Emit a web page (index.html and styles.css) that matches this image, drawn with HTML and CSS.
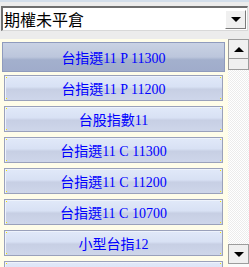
FILE: index.html
```html
<!DOCTYPE html>
<html lang="zh-Hant">
<head>
    <meta charset="UTF-8">
    <meta name="viewport" content="width=device-width, initial-scale=1.0">
    <title>期權未平倉</title>
    <link rel="stylesheet" href="styles.css">
</head>
<body>
    <div class="header">
        <div class="combo">
            <span class="combo-text">期權未平倉</span>
            <span class="combo-button"><span class="arrow-down"></span></span>
        </div>
    </div>

    <div class="panel">
        <div class="list">
            <div class="item selected">台指選11 P 11300</div>
            <div class="item">台指選11 P 11200</div>
            <div class="item">台股指數11</div>
            <div class="item">台指選11 C 11300</div>
            <div class="item">台指選11 C 11200</div>
            <div class="item">台指選11 C 10700</div>
            <div class="item">小型台指12</div>
            <div class="item">小型台指11</div>
        </div>
        <div class="scrollbar">
            <div class="scroll-button"><span class="arrow-up"></span></div>
            <div class="scroll-thumb"></div>
            <div class="scroll-track"></div>
            <div class="scroll-button"><span class="arrow-down"></span></div>
        </div>
    </div>
</body>
</html>
```

FILE: styles.css
```css
html, body {
    margin: 0;
    padding: 0;
    height: 100%;
    overflow: hidden;
}
body {
    background-color: #ececec;
    border-top: 2px solid #d3deea; /* thin blue strip at the top */
    box-sizing: border-box;
    display: flex;
    flex-direction: column;
}
.header {
    padding: 4px 1px 8px 1px;
}
.combo {
    height: 22px;
    background-color: #ffffff;
    border-top: 2px solid #6e6e6e;
    border-left: 2px solid #6e6e6e;
    border-right: 1px solid #d8d8d8;
    border-bottom: 1px solid #d8d8d8;
    display: flex;
    align-items: center;
    justify-content: space-between;
}
.combo-text {
    font-family: "Noto Sans CJK TC", sans-serif;
    font-size: 16px;
    color: #000000;
    padding-left: 1px;
    line-height: 18px;
}
.combo-button {
    width: 19px;
    height: 17px;
    margin-right: 1px;
    background-color: #f0f0f0;
    border-top: 1px solid #ffffff;
    border-left: 1px solid #ffffff;
    border-right: 1px solid #7a7a7a;
    border-bottom: 1px solid #7a7a7a;
    display: flex;
    align-items: center;
    justify-content: center;
}
.arrow-down {
    width: 0;
    height: 0;
    border-left: 5px solid transparent;
    border-right: 5px solid transparent;
    border-top: 5px solid #000000;
}
.arrow-up {
    width: 0;
    height: 0;
    border-left: 5px solid transparent;
    border-right: 5px solid transparent;
    border-bottom: 5px solid #000000;
}
.panel {
    flex: 1;
    display: flex;
    min-height: 0;
}
.list {
    width: 228px;
    background-color: #fffde9; /* pale yellow list background */
    padding: 5px 5px 0 4px;
    box-sizing: border-box;
    display: flex;
    flex-direction: column;
    gap: 5px;
    overflow: hidden;
}
.item {
    flex-shrink: 0;
    height: 26px;
    box-sizing: border-box;
    border: 1px solid #9aa1bb;
    box-shadow: inset 1px 1px 0 #eef3fc;
    /* tiny yellow pixels in the corners, then the glossy fill */
    background:
        linear-gradient(#f2e400, #f2e400) 1px 1px / 1px 1px no-repeat,
        linear-gradient(#f2e400, #f2e400) 1px calc(100% - 1px) / 1px 1px no-repeat,
        linear-gradient(#f2e400, #f2e400) calc(100% - 1px) 1px / 1px 1px no-repeat,
        linear-gradient(#f2e400, #f2e400) calc(100% - 1px) calc(100% - 1px) / 1px 1px no-repeat,
        linear-gradient(to bottom, #e1e9f9 0%, #d8e1f4 45%, #c7cfe4 55%, #ced6ea 100%);
    font-family: "Liberation Serif", "Noto Sans CJK TC", serif;
    font-size: 14px;
    color: #0000ff;
    display: flex;
    align-items: center;
    justify-content: center;
}
.item.selected {
    height: 30px;
    margin: -2px -2px;
    border-color: #8f9bbd;
    box-shadow: none;
    background: linear-gradient(to bottom, #c9d2e4 0%, #bcc6dc 50%, #a3b0cd 60%, #a0accb 100%);
}
.scrollbar {
    width: 21px;
    display: flex;
    flex-direction: column;
    background-color: #fafafa;
}
.scroll-button {
    flex-shrink: 0;
    height: 20px;
    box-sizing: border-box;
    border: 1px solid #9c9c9c;
    background-color: #f0f0f0;
    display: flex;
    align-items: center;
    justify-content: center;
}
.scroll-thumb {
    flex-shrink: 0;
    height: 11px;
    box-sizing: border-box;
    border: 1px solid #9c9c9c;
    border-top: none;
    background-color: #f0f0f0;
}
.scroll-track {
    flex: 1;
    /* dithered track */
    background: repeating-conic-gradient(#ffffff 0% 25%, #ececec 0% 50%) 0 0 / 2px 2px;
}
.scrollbar .scroll-button:last-child {
    margin-bottom: 3px;
}
```
